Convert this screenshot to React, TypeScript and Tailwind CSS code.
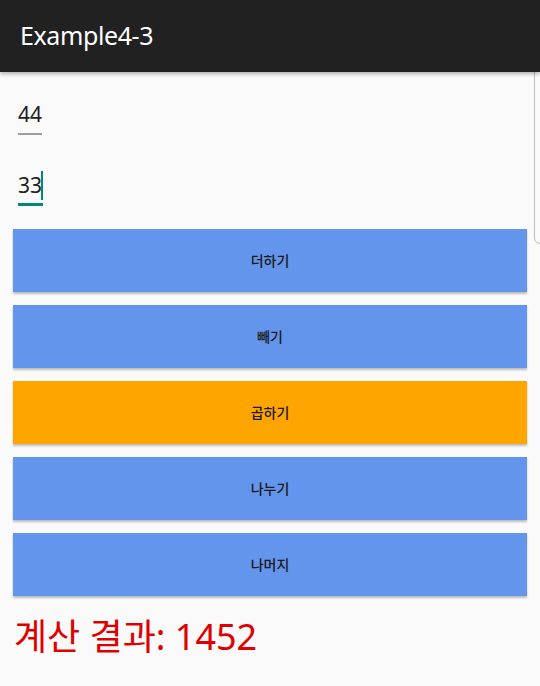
import React from "react";

const buttons = [
	{ label: "더하기", color: "bg-[#6495ed]" },
	{ label: "빼기", color: "bg-[#6495ed]" },
	{ label: "곱하기", color: "bg-[#ffa500]" },
	{ label: "나누기", color: "bg-[#6495ed]" },
	{ label: "나머지", color: "bg-[#6495ed]" },
];

const font = "font-['Noto_Sans','Noto_Sans_CJK_KR',sans-serif]";

export default function App() {
	return (
		<div className={`relative w-[540px] h-[686px] bg-[#fafafa] overflow-hidden ${font}`}>
			<div className="h-[72px] bg-[#212121] flex items-center pl-[20px] shadow-[0_2px_4px_rgba(0,0,0,0.3)] relative z-10">
				<h1 className="text-white text-[25px] tracking-[-0.4px]">Example4-3</h1>
			</div>

			{/* edge handle */}
			<div className="absolute right-[-6px] top-[62px] w-[12px] h-[182px] rounded-[6px] border border-[#bdbdbd] bg-[#fafafa]" />

			<div className="px-[18px] pt-[27px]">
				<div className="inline-flex flex-col">
					<span className="text-[21px] leading-[30px] text-[#222]">44</span>
					<div className="h-[2px] bg-[#9e9e9e] mt-[4px]" />
				</div>
			</div>
			<div className="px-[18px] pt-[35px]">
				<div className="inline-flex flex-col">
					<span className="text-[21px] leading-[30px] text-[#222] flex items-center">
						33
						<span className="inline-block w-[2px] h-[29px] bg-[#00897b] -ml-[1px]" />
					</span>
					<div className="h-[3px] bg-[#00897b] mt-[3px]" />
				</div>
			</div>

			<div className="flex flex-col gap-[13px] px-[13px] mt-[23px]">
				{buttons.map((b) => (
					<div
						key={b.label}
						className={`h-[63px] ${b.color} flex items-center justify-center text-[14px] font-medium text-[#1a1a1a] shadow-[0_2px_2px_rgba(0,0,0,0.25)]`}
					>
						{b.label}
					</div>
				))}
			</div>

			<p className="pl-[14px] mt-[17px] text-[36px] leading-[48px] text-[#e00000]">계산 결과: 1452</p>
		</div>
	);
}
